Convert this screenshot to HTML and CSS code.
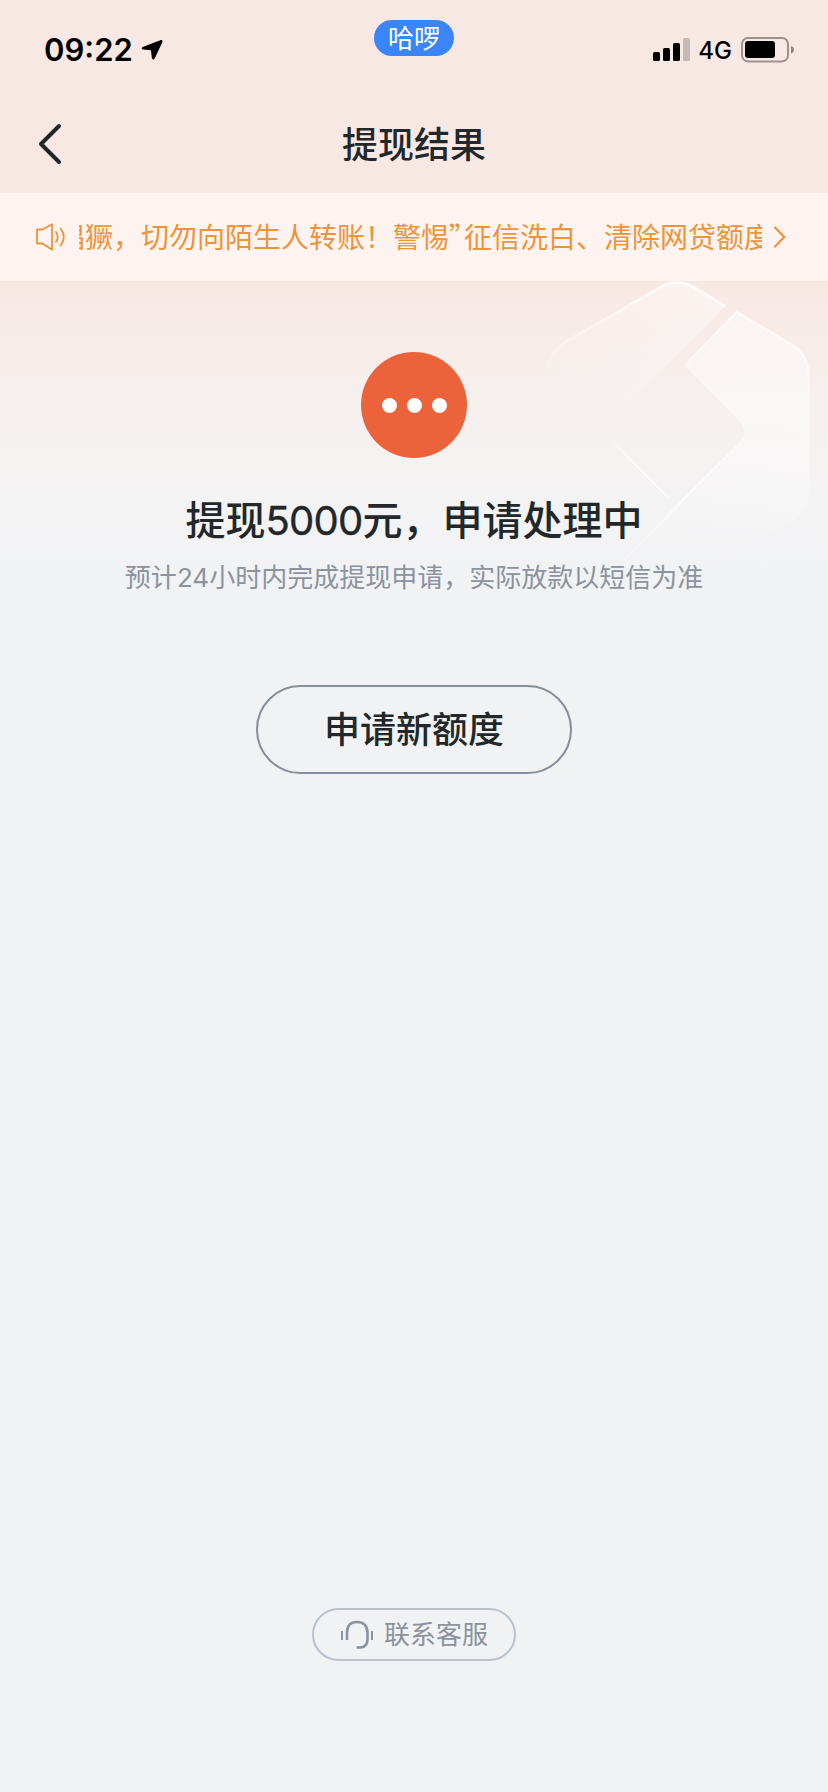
FILE: index.html
```
<!DOCTYPE html>
<html lang="zh-CN">
<head>
    <meta charset="UTF-8">
    <title>提现结果</title>
    <link rel="stylesheet" href="styles.css">
</head>
<body>
<div class="status">
    <div class="time">
        <span>09:22</span>
        <svg width="22" height="22" viewBox="0 0 22 22"><path d="M20 1.5L1.500 8.600Q.5 9.500 1.700 9.900L10.500 10.800L11.400 19.500Q12.200 20.800 13.200 19.500L21 2.800Q21.400 1.200 20 1.500Z" stroke="#000" stroke-width="1" stroke-linejoin="round"/></svg>
    </div>
    <div class="hello">哈啰</div>
    <div class="signal">
        <svg width="37" height="24" viewBox="0 0 37 24">
            <rect x="0" y="14" width="7" height="9" rx="1.6"/>
            <rect x="10" y="10" width="7" height="13" rx="1.6"/>
            <rect x="20" y="5" width="7" height="18" rx="1.6"/>
            <rect x="30" y="0" width="7" height="23" rx="1.6" fill="#c5b9b7"/>
        </svg>
        <span>4G</span>
        <svg width="54" height="26" viewBox="0 0 54 26">
            <rect x="2" y="1" width="46" height="23.4" rx="6" fill="none" stroke="#9b918f" stroke-width="2"/>
            <rect x="5" y="4" width="30" height="17" rx="3"/>
            <path d="M51 9Q54 10 54 12.7T51 16.7Z" fill="#8f8684"/>
        </svg>
    </div>
</div>
<div class="nav">
    <svg class="back" width="28" height="44" viewBox="0 0 28 44"><path d="M22 4L4 22L22 40" fill="none" stroke="#22272a" stroke-width="4" stroke-linecap="round" stroke-linejoin="round"/></svg>
    <h1>提现结果</h1>
</div>
<div class="notice">
    <svg class="horn" width="30" height="28" viewBox="0 0 30 28" fill="none" stroke="#ee9338" stroke-width="1.8" stroke-linejoin="round" stroke-linecap="round">
        <path d="M1 6.5H6.5L16 1.3V26.7L6.5 20.5H1Z"/>
        <path d="M20 9Q23.4 14 20 19M24.6 5.5Q31 14 24.6 22.5"/>
    </svg>
    <div class="text"><p>猖獗，切勿向陌生人转账！警惕<span>”</span>征信洗白、清除网贷额度</p></div>
    <svg class="more" width="14" height="22" viewBox="0 0 14 22"><path d="M2 1.5L11.3 11L2 20.5" fill="none" stroke="#ee9338" stroke-width="2.2" stroke-linecap="round"/></svg>
</div>
<div class="result">
    <svg class="bg" width="308" height="309" viewBox="0 33 924 927">
        <defs>
            <linearGradient id="f1" x1=".8" y1="0" x2=".4" y2="1">
                <stop offset="0" stop-color="#fff" stop-opacity=".45"/>
                <stop offset=".6" stop-color="#fff" stop-opacity="0"/>
            </linearGradient>
            <linearGradient id="f2" x1=".5" y1="0" x2=".4" y2="1">
                <stop offset="0" stop-color="#fff" stop-opacity=".5"/>
                <stop offset=".5" stop-color="#fff" stop-opacity=".42"/>
                <stop offset=".95" stop-color="#fff" stop-opacity="0"/>
            </linearGradient>
            <linearGradient id="l1" gradientUnits="userSpaceOnUse" x1="0" y1="40" x2="0" y2="320">
                <stop offset="0" stop-color="#fff" stop-opacity=".8"/>
                <stop offset="1" stop-color="#fff" stop-opacity="0"/>
            </linearGradient>
            <linearGradient id="l2" gradientUnits="userSpaceOnUse" x1="0" y1="120" x2="0" y2="760">
                <stop offset="0" stop-color="#fff" stop-opacity=".75"/>
                <stop offset=".35" stop-color="#fff" stop-opacity=".3"/>
                <stop offset="1" stop-color="#fff" stop-opacity="0"/>
            </linearGradient>
            <linearGradient id="l3" gradientUnits="userSpaceOnUse" x1="670" y1="500" x2="310" y2="880">
                <stop offset="0" stop-color="#fff" stop-opacity=".5"/>
                <stop offset=".5" stop-color="#fff" stop-opacity=".8"/>
                <stop offset="1" stop-color="#fff" stop-opacity=".2"/>
            </linearGradient>
            <linearGradient id="l4" gradientUnits="userSpaceOnUse" x1="270" y1="500" x2="340" y2="580">
                <stop offset="0" stop-color="#fff" stop-opacity=".1"/>
                <stop offset="1" stop-color="#fff" stop-opacity=".7"/>
            </linearGradient>
        </defs>
        <path fill="url(#f1)" d="M76 320Q80 250 136 216L425 50Q470 24 515 48L617 108L290 436Q258 470 284 520L450 686L320 800L136 700Q76 660 76 600Z"/>
        <path fill="none" stroke="url(#l1)" stroke-width="8" d="M78 320Q82 250 136 216L425 50Q470 26 515 48L617 108"/>
        <path fill="url(#f2)" d="M650 126L820 226Q866 256 868 310V670Q864 720 820 755L560 895Q460 930 310 872L660 520Q684 485 660 455L494 286Z"/>
        <path fill="none" stroke="url(#l2)" stroke-width="7" d="M494 286L650 126L820 226Q864 256 866 310V670"/>
        <path fill="none" stroke="url(#l3)" stroke-width="6" d="M672 505L316 866"/>
        <path fill="none" stroke="url(#l4)" stroke-width="7" d="M274 500Q276 514 290 528L448 686"/>
    </svg>
    <div class="dots"><i></i><i></i><i></i></div>
    <h2>提现<span>5000</span>元，申请处理中</h2>
    <p>预计<span>24</span>小时内完成提现申请，实际放款以短信为准</p>
    <button class="apply">申请新额度</button>
</div>
<div class="service">
    <svg width="34" height="30" viewBox="0 0 34 30" fill="none" stroke="#8a939e" stroke-width="2">
        <path d="M2 11V20M32 11V20"/>
        <path stroke-width="2.6" d="M7 20V12.500Q7 2 17 2T27.500 12.500V19Q27.500 27.500 20 27.500H16.500"/>
    </svg>
    <span>联系客服</span>
</div>
</body>
</html>
```

FILE: styles.css
```
*{
    margin: 0;
    padding: 0;
    box-sizing: border-box;
}
body{
    height: 1792px;
    background: #f0f2f4;
    font-family: "Noto Sans CJK SC", sans-serif;
    color: #22272a;
    display: flex;
    flex-direction: column;
    overflow: hidden;
}
svg{
    display: block;
    flex: none;
}
/* 状态栏 */
.status{
    height: 95px;
    padding: 0 34px 0 44px;
    background: #f8e8e4;
    display: grid;
    grid-template-columns: 330px 80px 1fr;
    color: #000;
    font-family: Inter, sans-serif;
}
.time{
    display: flex;
    height: 99px;
    align-items: center;
    gap: 8px;
    font-size: 31px;
    font-weight: 600;
}
.hello{
    width: 80px;
    height: 36px;
    margin-top: 20px;
    border-radius: 18px;
    background: #3a86f8;
    color: #fff;
    font: 400 26px/33px "Noto Sans CJK SC", sans-serif;
    text-align: center;
}
.signal{
    display: flex;
    height: 100px;
    align-items: center;
    justify-content: flex-end;
    font-size: 24px;
    font-weight: 500;
}
.signal span{
    margin: 0 8px 0 8px;
}
/* 标题 */
.nav{
    height: 98px;
    padding: 0 37px;
    background: #f8e8e4;
    display: grid;
    grid-template-columns: 1fr auto 1fr;
    align-items: center;
}
.nav h1{
    margin-bottom: 5px;
    font-size: 36px;
    line-height: 50px;
    font-weight: 500;
}
/* 公告 */
.notice{
    height: 88px;
    padding-left: 36px;
    background: #fdf4f2;
    display: flex;
    align-items: center;
    color: #ee9338;
    font-size: 28px;
    line-height: 40px;
}
.text{
    width: 683px;
    margin: -2px 0 0 13px;
    overflow: hidden;
    white-space: nowrap;
}
.text p{
    margin-left: -22px;
    font-weight: 400;
}
.text span{
    display: inline-block;
    width: 15px;
}
.more{
    margin-left: 11px;
}
/* 结果 */
.result{
    position: relative;
    height: 1327px;
    padding-top: 71px;
    background: linear-gradient(#f8e8e4 0, #f6f0ee 120px, #f4f3f4 220px, #f0f2f4 340px);
    display: flex;
    flex-direction: column;
    align-items: center;
}
.bg{
    position: absolute;
    top: 0;
    right: 0;
}
.dots{
    width: 106px;
    height: 106px;
    border-radius: 50%;
    background: #ec623b;
    display: flex;
    align-items: center;
    justify-content: center;
    gap: 10px;
}
.dots i{
    width: 15px;
    height: 15px;
    border-radius: 50%;
    background: #fff;
}
.result h2{
    position: relative;
    margin-top: 32px;
    font-size: 40px;
    line-height: 56px;
    font-weight: 500;
}
.result h2 span, .result p span{
    font-family: Inter, sans-serif;
}
.result h2 span{
    font-weight: 400;
    letter-spacing: -.8px;
    -webkit-text-stroke: .4px #22272a;
}
.result p{
    position: relative;
    margin-top: 9px;
    color: #8a939e;
    font-size: 26px;
    line-height: 36px;
    font-weight: 400;
}
.apply{
    width: 316px;
    height: 89px;
    margin-top: 89px;
    padding-bottom: 5px;
    border: 2px solid #858e99;
    border-radius: 45px;
    background: none;
    color: #22272a;
    font: 500 36px/50px "Noto Sans CJK SC", sans-serif;
}
/* 客服 */
.service{
    width: 204px;
    height: 53px;
    align-self: center;
    border: 2px solid #b9c2ce;
    border-radius: 27px;
    display: flex;
    align-items: center;
    justify-content: center;
    gap: 10px;
    color: #8a939e;
    font-size: 26px;
    line-height: 36px;
    font-weight: 400;
}
.service span{
    margin-top: -4px;
}
```
